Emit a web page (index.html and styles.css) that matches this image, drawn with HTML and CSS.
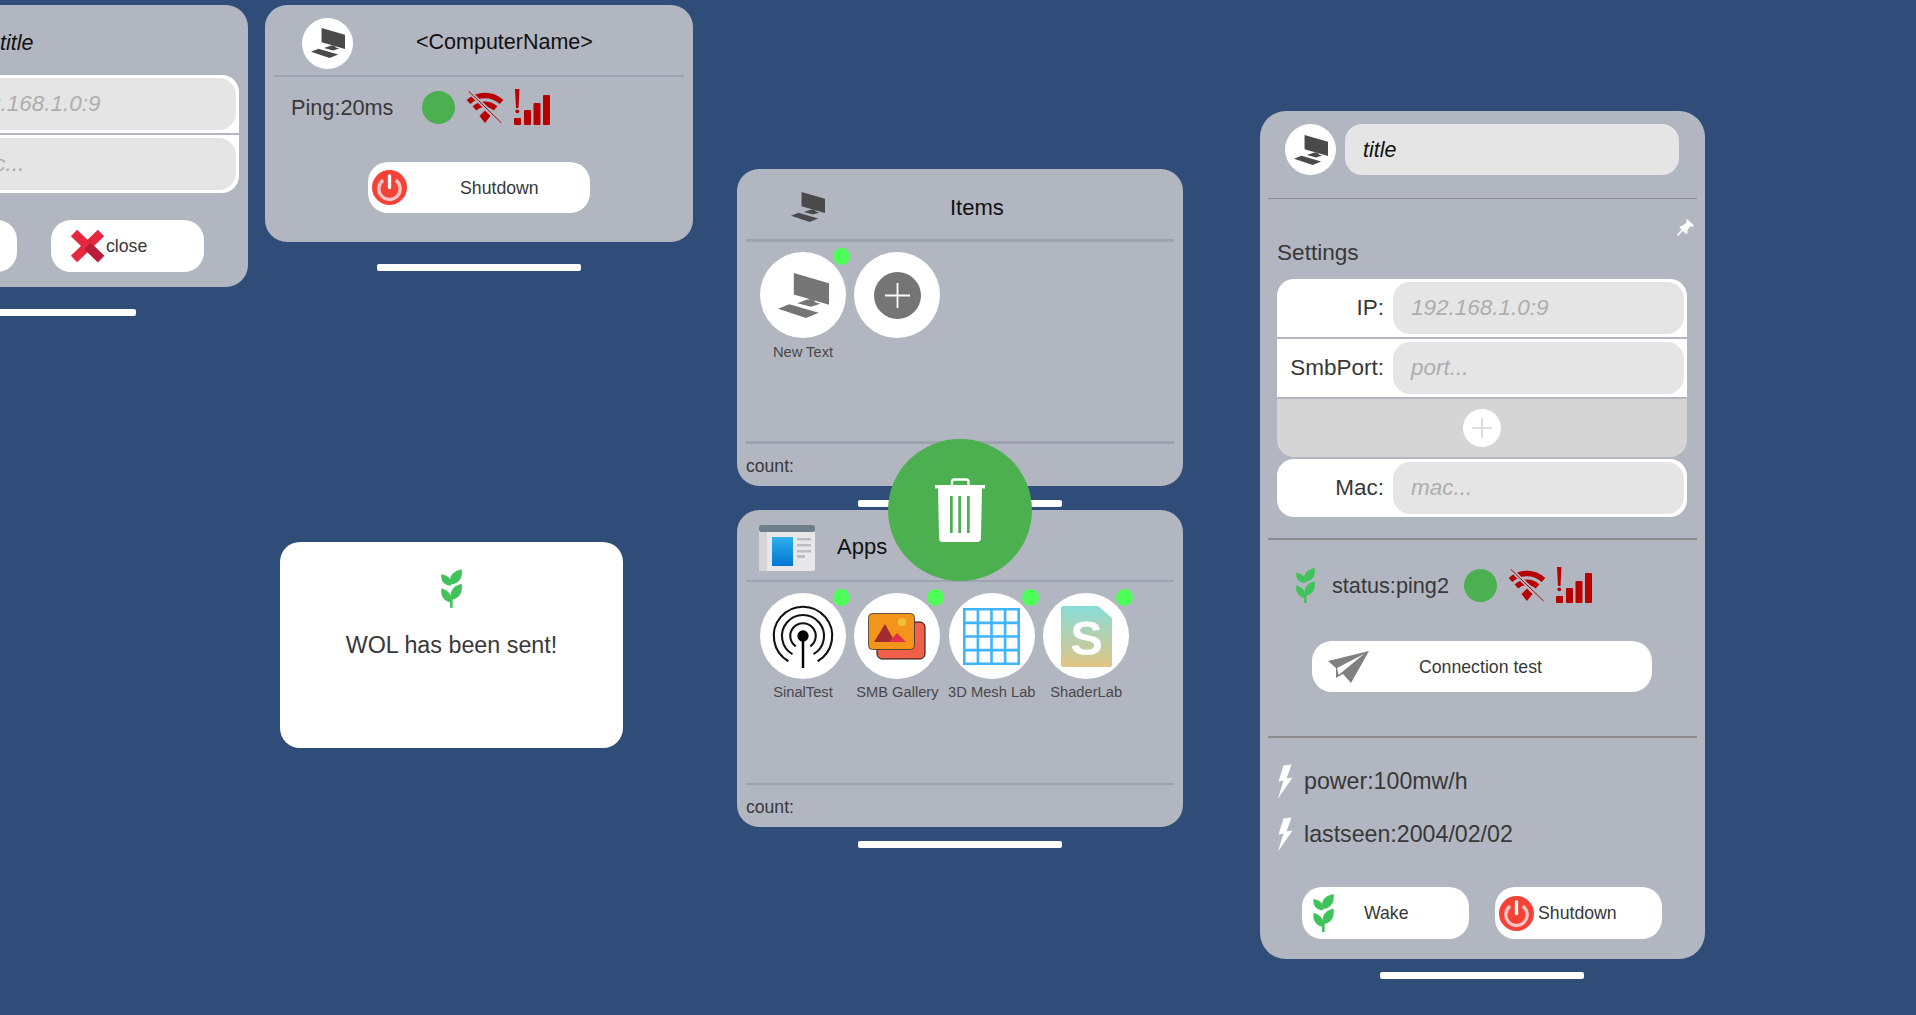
FILE: index.html
```html
<!DOCTYPE html>
<html lang="en">
<head>
  <meta charset="UTF-8">
  <meta name="viewport" content="width=device-width, initial-scale=1.0">
  <title>WOL panels</title>
  <link rel="stylesheet" href="styles.css">
</head>
<body>
  <!-- shared icons -->
  <svg class="sprites" aria-hidden="true">
    <symbol id="i-computer" viewBox="0 0 100 88">
      <path d="M31 0 100 20V62L31 42Z"/>
      <path d="M60 50 72 54V60L60 56Z"/>
      <path d="M38 59 57 52 83 60 65 66Z"/>
      <path d="M0 70 22 61 80 78 55 88Z"/>
    </symbol>
    <symbol id="i-leaf" viewBox="0 0 63 116">
      <path d="M31 46C20 24 34 6 62 0 66 24 56 42 31 46Z"/>
      <path d="M29 50C10 48-2 36 1 15 20 18 35 30 29 50Z"/>
      <path d="M32 92C22 70 36 50 62 44 66 68 56 88 32 92Z"/>
      <path d="M29 100C8 96-2 80 1 58 20 62 36 78 29 100Z"/>
      <path d="M27 88H35V116H27Z"/>
    </symbol>
    <symbol id="i-power" viewBox="0 0 36 36">
      <circle cx="18" cy="18" r="18" fill="#f44336"/>
      <path d="M11.500 10.500A11 11 0 1 0 24.500 10.500" fill="none" stroke="#fbc4c4" stroke-width="3.400"/>
      <path d="M18 6V18" stroke="#fff" stroke-width="3.400" stroke-linecap="round"/>
    </symbol>
    <symbol id="i-wifi" viewBox="0 0 37 33">
      <g fill="none" stroke="#b90000" stroke-width="5.400">
        <path d="M2 11A24 24 0 0 1 35 11"/>
        <path d="M8 17.500A15 15 0 0 1 29 17.500"/>
      </g>
      <path d="M13 25 18.500 19.500 24 25 18.500 32Z" fill="#b90000"/>
      <path d="M2 0 35 32" stroke="#b2b6c1" stroke-width="4"/>
      <path d="M2 0 35 32" stroke="#b90000" stroke-width="1"/>
    </symbol>
    <symbol id="i-signal" viewBox="0 0 36 36">
      <g fill="#b90000">
        <path d="M1 0H5.500L4.500 19H2Z"/>
        <circle cx="3.300" cy="22.300" r="1.900"/>
        <rect y="29" width="7" height="7" rx="1"/>
        <rect x="10" y="21" width="7" height="15" rx="1"/>
        <rect x="19.500" y="14" width="7" height="22" rx="1"/>
        <rect x="29" y="6" width="7" height="30" rx="1"/>
      </g>
    </symbol>
    <symbol id="i-bolt" viewBox="0 0 16 35">
      <path d="M14.500.5 6.500 1.500 1.500 17.500 6.500 16.500 1 34.500 15.500 13.500 9.500 14.500Z" fill="#fff"/>
    </symbol>
  </svg>

  <!-- edit window, cut by the left edge -->
  <section class="window win-edit">
    <div class="panel panel-edit">
      <div class="head head-edit"><span class="title-italic">title</span></div>
      <div class="fields fields-edit">
        <div class="field-row row-first">
          <span class="field-label">IP:</span>
          <div class="field-input">192.168.1.0:9</div>
        </div>
        <div class="field-row row-last">
          <span class="field-label">Mac:</span>
          <div class="field-input">mac...</div>
        </div>
      </div>
      <div class="button-row button-row-edit">
        <div class="pill pill-edit"></div>
        <div class="pill pill-edit pill-close">
          <svg class="icon-x" viewBox="0 0 35 34">
            <path d="M4 4 31 30" stroke="#e6283f" stroke-width="9"/>
            <path d="M31 4 4 30" stroke="#e6283f" stroke-width="9"/>
            <path d="M17.500 17 31 30" stroke="#b91d39" stroke-width="9"/>
          </svg>
          <span>close</span>
        </div>
      </div>
    </div>
    <div class="handle handle-far"></div>
  </section>

  <!-- computer status -->
  <section class="window win-status">
    <div class="panel panel-status">
      <div class="head">
        <div class="avatar avatar-status">
          <svg class="icon-computer"><use href="#i-computer"/></svg>
        </div>
        <span class="computer-name">&lt;ComputerName&gt;</span>
      </div>
      <div class="rule"></div>
      <div class="status-row status-row-small">
        <span class="status-text">Ping:20ms</span>
        <span class="dot"></span>
        <svg class="icon-wifi"><use href="#i-wifi"/></svg>
        <svg class="icon-signal"><use href="#i-signal"/></svg>
      </div>
      <div class="pill pill-shutdown">
        <svg class="icon-power"><use href="#i-power"/></svg>
        <span>Shutdown</span>
      </div>
    </div>
    <div class="handle handle-far"></div>
  </section>

  <!-- toast -->
  <section class="toast">
    <svg class="icon-leaf-toast"><use href="#i-leaf"/></svg>
    <p>WOL has been sent!</p>
  </section>

  <!-- items -->
  <section class="window win-items">
    <div class="panel panel-list">
      <div class="head">
        <svg class="icon-items"><use href="#i-computer"/></svg>
        <span class="list-title list-title-items">Items</span>
      </div>
      <div class="rule rule-thick"></div>
      <div class="tiles">
        <div class="tile">
          <div class="tile-circle">
            <svg class="icon-tile-computer"><use href="#i-computer"/></svg>
            <span class="badge"></span>
          </div>
          <span class="tile-label">New Text</span>
        </div>
        <div class="tile">
          <div class="tile-circle">
            <svg class="icon-add" viewBox="0 0 47 47">
              <circle cx="23.500" cy="23.500" r="23.500" fill="#757575"/>
              <path d="M11 23.500H36M23.500 11V36" stroke="#fff" stroke-width="1.800"/>
            </svg>
          </div>
        </div>
      </div>
      <div class="rule rule-thick"></div>
      <div class="foot">count:</div>
    </div>
    <div class="handle"></div>
  </section>

  <!-- apps -->
  <section class="window win-apps">
    <div class="panel panel-list">
      <div class="head">
        <svg class="icon-apps" viewBox="0 0 56 46">
          <defs>
            <linearGradient id="g-apps" x1="0" y1="0" x2="0" y2="1">
              <stop offset="0" stop-color="#2fb0ec"/>
              <stop offset="1" stop-color="#0076d2"/>
            </linearGradient>
          </defs>
          <rect width="56" height="46" rx="2" fill="#e8e8ea"/>
          <rect y="7" width="8" height="39" fill="#d6d6d6"/>
          <rect width="56" height="7" rx="2" fill="#6f7f8a"/>
          <rect x="13" y="12" width="21" height="29" fill="url(#g-apps)"/>
          <path d="M38 13H52V15.500H38ZM38 19H52V21.500H38ZM38 25H52V27.500H38ZM38 30H46V33H38Z" fill="#bdbdbd"/>
        </svg>
        <span class="list-title list-title-apps">Apps</span>
      </div>
      <div class="rule"></div>
      <div class="tiles tiles-apps">
        <div class="tile">
          <div class="tile-circle">
            <svg class="icon-sinal" viewBox="0 0 70 70">
              <g fill="none" stroke="#111" stroke-width="2.200">
                <path d="M19.500 61.800A31 31 0 1 1 50.500 61.800"/>
                <path d="M23.850 54.300A22.300 22.300 0 1 1 46.150 54.300"/>
                <path d="M27.300 46A13.500 13.500 0 1 1 42.700 46"/>
              </g>
              <path d="M35 35V69" stroke="#000" stroke-width="2.600"/>
              <circle cx="35" cy="35" r="6"/>
            </svg>
            <span class="badge"></span>
          </div>
          <span class="tile-label">SinalTest</span>
        </div>
        <div class="tile">
          <div class="tile-circle">
            <svg class="icon-gallery" viewBox="0 0 58 47">
              <rect x="9" y="9" width="48" height="37" rx="5" fill="#ef5f49" stroke="#111"/>
              <rect x=".5" y=".5" width="46" height="36" rx="4" fill="#f3951a" stroke="#333" stroke-width=".8"/>
              <path d="M6 29 17 11 27 29Z" fill="#a32a2d"/>
              <path d="M21 29 29 20 38 29Z" fill="#e3304a"/>
              <circle cx="34" cy="9" r="4" fill="#edc23b"/>
            </svg>
            <span class="badge"></span>
          </div>
          <span class="tile-label">SMB Gallery</span>
        </div>
        <div class="tile">
          <div class="tile-circle">
            <svg class="icon-mesh" viewBox="0 0 57 57">
              <path d="M1.300 1.300H55.700V55.700H1.300ZM14.900 1.300V55.700M28.500 1.300V55.700M42.100 1.300V55.700M1.300 14.900H55.700M1.300 28.500H55.700M1.300 42.100H55.700" fill="none" stroke="#40b4ff" stroke-width="2.600"/>
            </svg>
            <span class="badge"></span>
          </div>
          <span class="tile-label">3D Mesh Lab</span>
        </div>
        <div class="tile">
          <div class="tile-circle">
            <svg class="icon-shader" viewBox="0 0 51 61">
              <defs>
                <linearGradient id="g-shader" x1="0" y1="0" x2="0" y2="1">
                  <stop offset="0" stop-color="#87dcd8"/>
                  <stop offset="1" stop-color="#e0c483"/>
                </linearGradient>
              </defs>
              <path d="M2 0H37L51 12V59A2 2 0 0 1 49 61H2A2 2 0 0 1 0 59V2A2 2 0 0 1 2 0Z" fill="url(#g-shader)"/>
              <text class="shader-s" x="25.500" y="49" text-anchor="middle">S</text>
            </svg>
            <span class="badge"></span>
          </div>
          <span class="tile-label">ShaderLab</span>
        </div>
      </div>
      <div class="rule"></div>
      <div class="foot">count:</div>
    </div>
    <div class="handle"></div>
  </section>

  <!-- delete target over the two lists -->
  <div class="trash">
    <svg class="icon-trash" viewBox="0 0 50 65">
      <path d="M17 8V4A2.500 2.500 0 0 1 19.500 1.500H31A2.500 2.500 0 0 1 33.500 4V8" fill="none" stroke="#fff" stroke-width="2.400"/>
      <rect y="7" width="50" height="3.500" fill="#fff"/>
      <path d="M3 10H47L46 60A4 4 0 0 1 42 64H8A4 4 0 0 1 4 60Z" fill="#fff"/>
      <path d="M15 18H17.700V55H15ZM23.300 18H26V55H23.300ZM32 18H34.700V55H32Z" fill="#4caf50"/>
    </svg>
  </div>

  <!-- settings -->
  <section class="window win-settings">
    <div class="panel panel-settings">
      <div class="settings-head">
        <div class="avatar">
          <svg class="icon-computer"><use href="#i-computer"/></svg>
        </div>
        <div class="title-input"><span class="title-italic">title</span></div>
      </div>
      <div class="rule rule-dark rule-hair rule-head"></div>
      <div class="pin-row">
        <svg class="icon-pin" viewBox="0 0 17 17">
          <path d="M10 0 17 6.500 15 8 13.500 7 10.500 11 10.500 14 9 15 2.500 8.500 3.500 7 6 6.500 10 3 9 1.500Z" fill="#fff"/>
          <path d="M.5 16.500 6 10.500" stroke="#fff" stroke-width="1.600"/>
        </svg>
      </div>
      <div class="settings-title">Settings</div>
      <div class="fields">
        <div class="field-row row-first">
          <span class="field-label">IP:</span>
          <div class="field-input">192.168.1.0:9</div>
        </div>
        <div class="field-row">
          <span class="field-label">SmbPort:</span>
          <div class="field-input">port...</div>
        </div>
        <div class="field-row field-add row-last">
          <svg class="icon-add-small" viewBox="0 0 38 38">
            <circle cx="19" cy="19" r="19" fill="#fff"/>
            <path d="M9 19H29M19 9V29" stroke="#d5d5d5" stroke-width="1.600"/>
          </svg>
        </div>
        <div class="field-row row-first row-last">
          <span class="field-label">Mac:</span>
          <div class="field-input">mac...</div>
        </div>
      </div>
      <div class="rule rule-dark rule-fields"></div>
      <div class="status-row status-row-wide">
        <svg class="icon-leaf-status"><use href="#i-leaf"/></svg>
        <span class="status-text">status:ping2</span>
        <span class="dot"></span>
        <svg class="icon-wifi"><use href="#i-wifi"/></svg>
        <svg class="icon-signal"><use href="#i-signal"/></svg>
      </div>
      <div class="pill pill-connection">
        <svg class="icon-plane" viewBox="0 0 41 32">
          <path d="M41 0 0 10 8 17V27L15 23 23 32Z" fill="#808080"/>
          <path d="M36 3 9 17 10.500 24Z" fill="#fff"/>
        </svg>
        <span>Connection test</span>
      </div>
      <div class="rule rule-dark rule-connection"></div>
      <div class="info">
        <div class="info-row">
          <svg class="icon-bolt"><use href="#i-bolt"/></svg>
          <span>power:100mw/h</span>
        </div>
        <div class="info-row">
          <svg class="icon-bolt"><use href="#i-bolt"/></svg>
          <span>lastseen:2004/02/02</span>
        </div>
      </div>
      <div class="button-row button-row-settings">
        <div class="pill pill-wake">
          <svg class="icon-leaf-wake"><use href="#i-leaf"/></svg>
          <span>Wake</span>
        </div>
        <div class="pill pill-off">
          <svg class="icon-power"><use href="#i-power"/></svg>
          <span>Shutdown</span>
        </div>
      </div>
    </div>
    <div class="handle handle-settings"></div>
  </section>
</body>
</html>
```

FILE: styles.css
```css
body {
  font-family: "Liberation Sans", Arial, sans-serif;
  background-color: #2f4d78;
  color: #383838;
  margin: 0;
  padding: 0;
  height: 1015px;
  overflow: hidden;
  position: relative;
}

.sprites {
  position: absolute;
  width: 0;
  height: 0;
}

/* windows sit on a free canvas */
.window {
  position: absolute;
  display: flex;
  flex-direction: column;
  align-items: center;
}

.win-edit {
  left: -180px;
  top: 5px;
}

.win-status {
  left: 265px;
  top: 5px;
}

.win-items {
  left: 737px;
  top: 169px;
}

.win-apps {
  left: 737px;
  top: 510px;
}

.win-settings {
  left: 1260px;
  top: 111px;
}

.panel {
  background-color: #b2b6c1;
  border-radius: 22px;
  display: flex;
  flex-direction: column;
  box-sizing: border-box;
}

.panel-edit {
  width: 428px;
  height: 282px;
}

.panel-status {
  width: 428px;
  height: 237px;
}

.panel-list {
  width: 446px;
  height: 317px;
}

.panel-settings {
  width: 445px;
  height: 848px;
  border-radius: 26px;
}

.handle {
  width: 204px;
  height: 7px;
  margin-top: 14px;
  background-color: #fff;
  border-radius: 2px;
}

.handle-far {
  margin-top: 22px;
}

.handle-settings {
  margin-top: 13px;
  margin-right: 1px;
}

.rule {
  height: 2px;
  margin: 0 9px;
  background-color: #9fa2af;
  flex: none;
}

.rule-thick {
  height: 3px;
}

.rule-dark {
  margin: 0 8px;
  background-color: #8c8c8f;
}

.rule-hair {
  height: 1px;
}

.rule-head {
  margin-top: 23px;
}

.rule-fields {
  margin-top: 21px;
}

.rule-connection {
  margin-top: 44px;
}

.head {
  height: 70px;
  padding-top: 6px;
  box-sizing: border-box;
  display: flex;
  align-items: center;
  flex: none;
}

.head-edit {
  padding-left: 180px;
}

.title-italic {
  font-size: 21.500px;
  font-style: italic;
  color: #111;
}

.avatar {
  width: 51px;
  height: 51px;
  border-radius: 50%;
  background-color: #fff;
  display: flex;
  align-items: center;
  justify-content: center;
  flex: none;
}

.avatar-status {
  margin-left: 37px;
}

.icon-computer {
  width: 34px;
  height: 30px;
  color: #4a4a4a;
  fill: currentColor;
}

.computer-name {
  margin-left: 63px;
  margin-top: -2px;
  font-size: 21.500px;
  color: #111;
}

/* status line */
.status-row {
  display: flex;
  align-items: center;
  height: 36px;
  flex: none;
}

.status-row-small {
  margin-top: 12px;
  padding-left: 26px;
}

.status-row-small .status-text {
  margin-top: 2px;
  margin-right: 29px;
}

.status-row-wide {
  margin-top: 27px;
  padding-left: 36px;
}

.status-row-wide .status-text {
  margin-top: 2px;
  margin-left: 17px;
  margin-right: 15px;
}

.status-text {
  font-size: 21.700px;
  color: #383838;
}

.dot {
  width: 33px;
  height: 33px;
  border-radius: 50%;
  background-color: #4caf50;
  flex: none;
}

.icon-wifi {
  width: 38px;
  height: 33px;
  margin-left: 11px;
  flex: none;
}

.icon-signal {
  width: 36px;
  height: 36px;
  margin-left: 10px;
  flex: none;
}

.icon-leaf-status {
  width: 19px;
  height: 35px;
  fill: #41c35c;
  flex: none;
}

/* pill buttons */
.pill {
  background-color: #fff;
  border-radius: 20px;
  height: 51px;
  display: flex;
  align-items: center;
  font-size: 17.700px;
  color: #383838;
  box-sizing: border-box;
  flex: none;
}

.pill span {
  margin-top: 1px;
}

.pill-shutdown {
  width: 222px;
  margin: 37px auto 0;
  padding-left: 4px;
  gap: 53px;
}

.icon-power {
  width: 35px;
  height: 35px;
  flex: none;
}

.pill-connection {
  width: 340px;
  margin: 38px 0 0 52px;
  padding-left: 16px;
  gap: 50px;
}

.icon-plane {
  width: 41px;
  height: 32px;
  flex: none;
}

.button-row {
  display: flex;
  justify-content: center;
}

.button-row-edit {
  margin-top: 27px;
  gap: 34px;
}

.button-row-settings {
  margin-top: 36px;
  padding-right: 1px;
  gap: 26px;
}

.pill-edit {
  width: 153px;
  height: 52px;
}

.pill-close {
  padding-left: 19px;
  gap: 1px;
}

.icon-x {
  width: 35px;
  height: 34px;
  flex: none;
}

.pill-wake,
.pill-off {
  width: 167px;
  height: 52px;
}

.pill-wake {
  padding-left: 11px;
  gap: 30px;
}

.pill-off {
  padding-left: 4px;
  gap: 4px;
}

.icon-leaf-wake {
  width: 21px;
  height: 38px;
  fill: #41c35c;
  flex: none;
}

/* form rows */
.fields {
  display: flex;
  flex-direction: column;
  gap: 2px;
  width: 410px;
  margin-left: 17px;
  flex: none;
}

.fields-edit {
  margin-left: 9px;
}

.field-row {
  height: 58px;
  background-color: #fff;
  display: flex;
  align-items: center;
  padding-right: 3px;
  box-sizing: border-box;
}

.row-first {
  border-top-left-radius: 17px;
  border-top-right-radius: 17px;
}

.row-last {
  border-bottom-left-radius: 17px;
  border-bottom-right-radius: 17px;
}

.field-label {
  width: 107px;
  margin-right: 9px;
  text-align: right;
  font-size: 22.500px;
  color: #383838;
  flex: none;
}

.field-input {
  flex: 1;
  height: 52px;
  line-height: 52px;
  padding-left: 18px;
  background-color: #e5e5e5;
  border-radius: 17px;
  font-size: 22.500px;
  font-style: italic;
  color: #aeaeae;
}

.field-add {
  background-color: #d5d5d5;
  justify-content: center;
  padding-right: 0;
}

.icon-add-small {
  width: 38px;
  height: 38px;
}

/* list windows */
.icon-items {
  width: 34px;
  height: 30px;
  margin-left: 54px;
  color: #4a4a4a;
  fill: currentColor;
  flex: none;
}

.icon-apps {
  width: 56px;
  height: 46px;
  margin-left: 22px;
  flex: none;
}

.list-title {
  font-size: 22px;
  color: #111;
}

.list-title-items {
  margin-left: 125px;
  margin-top: 1px;
}

.list-title-apps {
  margin-left: 22px;
  margin-top: -2px;
}

.tiles {
  flex: 1;
  display: flex;
  align-items: flex-start;
  gap: 8.400px;
  padding: 10px 0 0 23px;
}

.tiles-apps {
  padding-top: 11px;
}

.tile {
  width: 86px;
  display: flex;
  flex-direction: column;
  align-items: center;
}

.tile-circle {
  position: relative;
  width: 86px;
  height: 86px;
  border-radius: 50%;
  background-color: #fff;
  display: flex;
  align-items: center;
  justify-content: center;
}

.tile-label {
  margin-top: 6px;
  font-size: 14.700px;
  line-height: 16px;
  color: #484848;
  white-space: nowrap;
}

.tiles-apps .tile-label {
  margin-top: 5px;
}

.badge {
  position: absolute;
  left: 73px;
  top: -4px;
  width: 17px;
  height: 17px;
  border-radius: 50%;
  background-color: #4dfd58;
}

.icon-tile-computer {
  width: 51px;
  height: 45px;
  color: #757575;
  fill: currentColor;
}

.icon-add {
  width: 47px;
  height: 47px;
}

.icon-sinal {
  width: 66px;
  height: 66px;
}

.icon-gallery {
  width: 58px;
  height: 47px;
}

.icon-mesh {
  width: 57px;
  height: 57px;
}

.icon-shader {
  width: 51px;
  height: 61px;
}

.shader-s {
  font-family: "Liberation Sans", Arial, sans-serif;
  font-size: 49px;
  font-weight: bold;
  fill: #fff;
}

.foot {
  height: 42px;
  line-height: 44px;
  padding-left: 9px;
  font-size: 17.600px;
  color: #383838;
  flex: none;
}

/* overlays */
.trash {
  position: absolute;
  left: 888px;
  top: 439px;
  width: 144px;
  height: 142px;
  border-radius: 50%;
  background-color: #4caf50;
  display: flex;
  align-items: center;
  justify-content: center;
}

.icon-trash {
  width: 50px;
  height: 65px;
}

.toast {
  position: absolute;
  left: 280px;
  top: 542px;
  width: 343px;
  height: 206px;
  padding-top: 27px;
  box-sizing: border-box;
  background-color: #fff;
  border-radius: 20px;
  display: flex;
  flex-direction: column;
  align-items: center;
}

.toast p {
  margin: 24px 0 0;
  font-size: 23.300px;
  line-height: 26px;
  color: #383838;
}

.icon-leaf-toast {
  width: 21px;
  height: 39px;
  fill: #41c35c;
}

/* settings window */
.settings-head {
  display: flex;
  gap: 9px;
  padding: 13px 0 0 25px;
  flex: none;
}

.title-input {
  width: 334px;
  height: 51px;
  line-height: 53px;
  padding-left: 18px;
  box-sizing: border-box;
  background-color: #e5e5e5;
  border-radius: 17px;
}

.pin-row {
  display: flex;
  justify-content: flex-end;
  margin-top: 20px;
  padding-right: 11px;
  height: 17px;
  flex: none;
}

.icon-pin {
  width: 17px;
  height: 17px;
}

.settings-title {
  margin: 4px 0 13px 17px;
  font-size: 22.600px;
  line-height: 26px;
  color: #383838;
}

.info {
  display: flex;
  flex-direction: column;
  gap: 19px;
  margin-top: 26px;
  padding-left: 17px;
}

.info-row {
  display: flex;
  align-items: center;
  gap: 11px;
  height: 34px;
  font-size: 23.200px;
  color: #383838;
}

.icon-bolt {
  width: 16px;
  height: 35px;
  flex: none;
}
```
